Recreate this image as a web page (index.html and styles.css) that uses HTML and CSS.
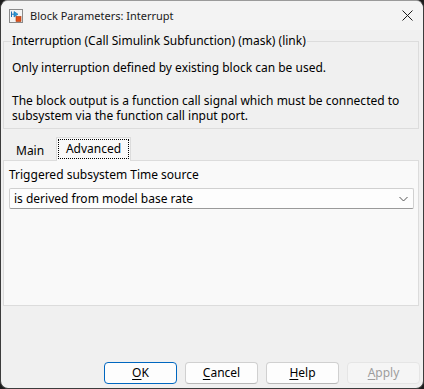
FILE: index.html
```html
<!DOCTYPE html>
<html>
<head>
<meta charset="utf-8">
<link rel="stylesheet" href="styles.css">
</head>
<body>
<div class="window">
  <div class="titlebar">
    <svg class="appicon" width="14" height="14" viewBox="0 0 14 14">
      <rect x="0.5" y="0.5" width="13" height="13" fill="#f4f4f4" stroke="#8a8a8a"/>
      <path d="M2.5 2.5 L2.5 8 M2.5 5.2 L6 5.2" stroke="#1f6fb5" stroke-width="1" fill="none"/>
      <path d="M5 2.5 L9 5.2 L5 8 Z" fill="#2a9bd8" stroke="#1a6ca8" stroke-width="0.6"/>
      <rect x="7" y="7.5" width="5" height="5" fill="#e0501a" stroke="#a83a10" stroke-width="0.6"/>
    </svg>
    <span class="title">Block Parameters: Interrupt</span>
    <svg class="close" width="11" height="11" viewBox="0 0 11 11">
      <path d="M0.5 0.5 L10.5 10.5 M10.5 0.5 L0.5 10.5" stroke="#1a1a1a" stroke-width="1"/>
    </svg>
  </div>
  <div class="body">
    <fieldset class="group">
      <legend>Interruption (Call Simulink Subfunction) (mask) (link)</legend>
      <p class="desc">Only interruption defined by existing block can be used.</p>
      <p class="desc second">The block output is a function call signal which must be connected to subsystem via the function call input port.</p>
    </fieldset>
    <div class="tabs">
      <div class="tab">Main</div>
      <div class="tab active"><span class="focus">Advanced</span></div>
    </div>
    <div class="panel">
      <div class="label">Triggered subsystem Time source</div>
      <div class="select">
        <span>is derived from model base rate</span>
        <svg width="9" height="6" viewBox="0 0 9 6"><path d="M0.5 1 L4.5 5 L8.5 1" stroke="#555" fill="none" stroke-width="1"/></svg>
      </div>
    </div>
    <div class="buttons">
      <div class="btn default"><u>O</u>K</div>
      <div class="btn"><u>C</u>ancel</div>
      <div class="btn"><u>H</u>elp</div>
      <div class="btn disabled"><u>A</u>pply</div>
    </div>
  </div>
</div>
</body>
</html>
```
FILE: styles.css
```css
html, body {
  margin: 0;
  padding: 0;
  width: 424px;
  height: 389px;
  background: #1c1c1c;
  overflow: hidden;
}
.window {
  box-sizing: border-box;
  width: 424px;
  height: 389px;
  border: 1px solid #3c3c3c;
  border-top-color: #9a9a9a;
  border-radius: 8px;
  background: #f0f0f0;
  overflow: hidden;
  display: flex;
  flex-direction: column;
  font-family: "Segoe UI", "Noto Sans", sans-serif;
  font-size: 12px;
  color: #000;
}
.titlebar {
  height: 29px;
  flex: none;
  background: #f3f3f3;
  display: flex;
  align-items: center;
  padding-left: 8px;
  padding-right: 10px;
}
.appicon { flex: none; }
.title {
  margin-left: 7px;
  flex: 1;
  font-size: 11px;
  color: #1a1a1a;
}
.close { flex: none; }
.body {
  flex: 1;
  display: flex;
  flex-direction: column;
  padding: 0 4px 0 2px;
}
.group {
  margin: 3px 0 0 0;
  padding: 11px 8px 6px 8px;
  border: 1px solid #dcdcdc;
  height: 96px;
  box-sizing: border-box;
}
.group legend {
  padding: 0 1px;
  margin-left: -1px;
  line-height: 16px;
}
.desc {
  margin: 0;
  line-height: 15px;
}
.desc.second { margin-top: 18px; }
.tabs {
  display: flex;
  align-items: flex-end;
  margin-top: 9px;
  padding-left: 2px;
  height: 22px;
}
.tab {
  width: 51px;
  box-sizing: border-box;
  height: 19px;
  line-height: 17px;
  padding: 0 0 0 10px;
  border: 1px solid transparent;
  border-bottom: none;
}
.tab.active {
  width: 75px;
  height: 24px;
  background: #f9f9f9;
  border-color: #dcdcdc;
  padding: 1px 1px 0 1px;
  margin-bottom: -1px;
  position: relative;
  z-index: 1;
}
.focus {
  display: block;
  outline: 1px dotted #000;
  outline-offset: -1px;
  height: 20px;
  line-height: 19px;
  text-align: center;
}
.panel {
  height: 146px;
  box-sizing: border-box;
  background: #f9f9f9;
  border: 1px solid #dcdcdc;
  padding: 5px 4px 0 5px;
}
.label { line-height: 18px; }
.select {
  margin-top: 4px;
  height: 21px;
  box-sizing: border-box;
  background: #fdfdfd;
  border: 1px solid #d0d0d0;
  border-bottom-color: #9a9a9a;
  border-radius: 2px;
  display: flex;
  align-items: center;
  justify-content: space-between;
  padding: 0 5px 0 4px;
}
.buttons {
  display: flex;
  justify-content: flex-end;
  gap: 8px;
  margin-top: auto;
  margin-bottom: 4px;
  margin-right: -1px;
}
.btn {
  width: 73px;
  height: 22px;
  box-sizing: border-box;
  border: 1px solid #d0d0d0;
  border-bottom-color: #b8b8b8;
  border-radius: 4px;
  background: #fdfdfd;
  text-align: center;
  line-height: 20px;
}
.btn u { text-underline-offset: 2px; }
.btn.default { border: 1px solid #0067c0; }
.btn.disabled {
  color: #9d9d9d;
  background: #f5f5f5;
  border-color: #e5e5e5;
}
```
